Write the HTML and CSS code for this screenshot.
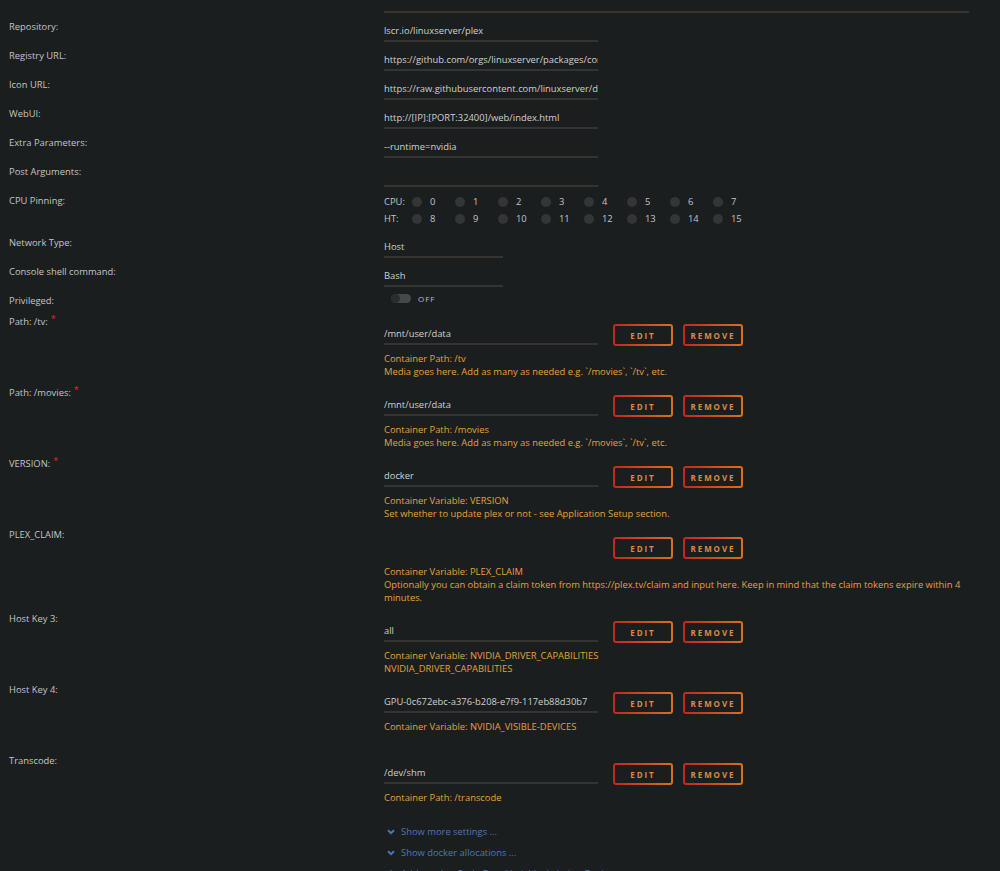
FILE: index.html
```html
<!DOCTYPE html>
<html lang="en">
<head>
    <meta charset="UTF-8">
    <meta name="viewport" content="width=device-width, initial-scale=1.0">
    <title>Update Container</title>
    <link rel="stylesheet" href="styles.css">
</head>
<body>
    <div class="form">
        <div class="topline"></div>

        <div class="row">
            <div class="label">Repository:</div>
            <div class="value"><input class="field" value="lscr.io/linuxserver/plex"></div>
        </div>
        <div class="row">
            <div class="label">Registry URL:</div>
            <div class="value"><input class="field" value="https://github.com/orgs/linuxserver/packages/container/package/plex"></div>
        </div>
        <div class="row">
            <div class="label">Icon URL:</div>
            <div class="value"><input class="field" value="https://raw.githubusercontent.com/linuxserver/docker-templates/master/linuxserver.io/img/plex-logo.png"></div>
        </div>
        <div class="row">
            <div class="label">WebUI:</div>
            <div class="value"><input class="field" value="http://[IP]:[PORT:32400]/web/index.html"></div>
        </div>
        <div class="row">
            <div class="label">Extra Parameters:</div>
            <div class="value"><input class="field" value="--runtime=nvidia"></div>
        </div>
        <div class="row">
            <div class="label">Post Arguments:</div>
            <div class="value"><input class="field" value=""></div>
        </div>

        <div class="row">
            <div class="label">CPU Pinning:</div>
            <div class="cpus">
                <div class="cpu-line">
                    <span class="cpu-name">CPU:</span>
                    <span class="core"><i></i>0</span>
                    <span class="core"><i></i>1</span>
                    <span class="core"><i></i>2</span>
                    <span class="core"><i></i>3</span>
                    <span class="core"><i></i>4</span>
                    <span class="core"><i></i>5</span>
                    <span class="core"><i></i>6</span>
                    <span class="core"><i></i>7</span>
                </div>
                <div class="cpu-line">
                    <span class="cpu-name">HT:</span>
                    <span class="core"><i></i>8</span>
                    <span class="core"><i></i>9</span>
                    <span class="core"><i></i>10</span>
                    <span class="core"><i></i>11</span>
                    <span class="core"><i></i>12</span>
                    <span class="core"><i></i>13</span>
                    <span class="core"><i></i>14</span>
                    <span class="core"><i></i>15</span>
                </div>
            </div>
        </div>

        <div class="row">
            <div class="label">Network Type:</div>
            <div class="value"><div class="field select">Host</div></div>
        </div>
        <div class="row">
            <div class="label">Console shell command:</div>
            <div class="value"><div class="field select">Bash</div></div>
        </div>
        <div class="row row-short">
            <div class="label">Privileged:</div>
            <div class="toggle-wrap">
                <span class="toggle"><span class="knob"></span></span>
                <span class="toggle-text">OFF</span>
            </div>
        </div>

        <div class="config">
            <div class="label">Path: /tv:<span class="req">*</span></div>
            <div class="config-body">
                <div class="config-line">
                    <input class="field" value="/mnt/user/data">
                    <button class="btn">Edit</button>
                    <button class="btn">Remove</button>
                </div>
                <div class="desc">
                    <div>Container Path: /tv</div>
                    <div>Media goes here. Add as many as needed e.g. `/movies`, `/tv`, etc.</div>
                </div>
            </div>
        </div>

        <div class="config">
            <div class="label">Path: /movies:<span class="req">*</span></div>
            <div class="config-body">
                <div class="config-line">
                    <input class="field" value="/mnt/user/data">
                    <button class="btn">Edit</button>
                    <button class="btn">Remove</button>
                </div>
                <div class="desc">
                    <div>Container Path: /movies</div>
                    <div>Media goes here. Add as many as needed e.g. `/movies`, `/tv`, etc.</div>
                </div>
            </div>
        </div>

        <div class="config">
            <div class="label">VERSION:<span class="req">*</span></div>
            <div class="config-body">
                <div class="config-line">
                    <input class="field" value="docker">
                    <button class="btn">Edit</button>
                    <button class="btn">Remove</button>
                </div>
                <div class="desc">
                    <div>Container Variable: VERSION</div>
                    <div>Set whether to update plex or not - see Application Setup section.</div>
                </div>
            </div>
        </div>

        <div class="config">
            <div class="label">PLEX_CLAIM:</div>
            <div class="config-body">
                <div class="config-line">
                    <span class="field hidden-field"></span>
                    <button class="btn">Edit</button>
                    <button class="btn">Remove</button>
                </div>
                <div class="desc">
                    <div>Container Variable: PLEX_CLAIM</div>
                    <div>Optionally you can obtain a claim token from https://plex.tv/claim and input here. Keep in mind that the claim tokens expire within 4 minutes.</div>
                </div>
            </div>
        </div>

        <div class="config">
            <div class="label">Host Key 3:</div>
            <div class="config-body">
                <div class="config-line">
                    <input class="field" value="all">
                    <button class="btn">Edit</button>
                    <button class="btn">Remove</button>
                </div>
                <div class="desc">
                    <div>Container Variable: NVIDIA_DRIVER_CAPABILITIES</div>
                    <div>NVIDIA_DRIVER_CAPABILITIES</div>
                </div>
            </div>
        </div>

        <div class="config">
            <div class="label">Host Key 4:</div>
            <div class="config-body">
                <div class="config-line">
                    <input class="field" value="GPU-0c672ebc-a376-b208-e7f9-117eb88d30b7">
                    <button class="btn">Edit</button>
                    <button class="btn">Remove</button>
                </div>
                <div class="desc">
                    <div>Container Variable: NVIDIA_VISIBLE-DEVICES</div>
                    <div></div>
                </div>
            </div>
        </div>

        <div class="config">
            <div class="label">Transcode:</div>
            <div class="config-body">
                <div class="config-line">
                    <input class="field" value="/dev/shm">
                    <button class="btn">Edit</button>
                    <button class="btn">Remove</button>
                </div>
                <div class="desc">
                    <div>Container Path: /transcode</div>
                    <div></div>
                </div>
            </div>
        </div>

        <div class="links">
            <a class="link" href="#">
                <svg width="8" height="6" viewBox="0 0 8 6"><polyline points="1,1.2 4,4.2 7,1.2" fill="none" stroke="currentColor" stroke-width="2"/></svg>
                Show more settings ...
            </a>
            <a class="link" href="#">
                <svg width="8" height="6" viewBox="0 0 8 6"><polyline points="1,1.2 4,4.2 7,1.2" fill="none" stroke="currentColor" stroke-width="2"/></svg>
                Show docker allocations ...
            </a>
            <a class="link" href="#">
                <svg width="8" height="8" viewBox="0 0 8 8"><path d="M4 0.5V7.5M0.5 4H7.5" stroke="currentColor" stroke-width="2"/></svg>
                Add another Path, Port, Variable, Label or Device
            </a>
        </div>
    </div>
</body>
</html>
```

FILE: styles.css
```css
body {
    margin: 0;
    background-color: #1b1e1f;
    color: #c4c4c4;
    font-family: "Open Sans", "Noto Sans", sans-serif;
    font-size: 9.4px;
    overflow: hidden;
}
.form {
    padding-top: 11px;
}
.topline {
    margin-left: 384px;
    width: 585px;
    height: 2px;
    background-color: #363431;
}
.row {
    display: flex;
    min-height: 29px;
}
.row-short {
    min-height: 20px;
}
.label {
    width: 375px;
    padding-left: 9px;
    padding-top: 7px;
    line-height: 14px;
    flex-shrink: 0;
}
.req {
    color: #e22828;
    font-size: 9px;
    margin-left: 3px;
    position: relative;
    top: -3px;
}
.value {
    padding-top: 8px;
}
.field {
    display: block;
    box-sizing: border-box;
    width: 214px;
    height: 21px;
    margin: 0;
    padding: 0 0 1px 0;
    border: none;
    border-bottom: 2px solid #363431;
    background: transparent;
    color: #cfcfcf;
    font: inherit;
    outline: none;
}
.select {
    width: 119px;
    line-height: 19px;
}
.hidden-field {
    border-bottom-color: transparent;
}
.cpus {
    padding-top: 6px;
    padding-bottom: 2px;
}
.cpu-line {
    display: flex;
    align-items: center;
    height: 17px;
}
.cpu-name {
    width: 28px;
}
.core {
    display: flex;
    align-items: center;
    width: 43px;
}
.core i {
    width: 10px;
    height: 10px;
    border-radius: 50%;
    background-color: #333538;
    margin-right: 8px;
}
.toggle-wrap {
    display: flex;
    align-items: center;
    padding-left: 7px;
    padding-top: 3px;
    height: 17px;
}
.toggle {
    width: 20px;
    height: 9px;
    border-radius: 5px;
    background-color: #46494c;
    position: relative;
}
.knob {
    position: absolute;
    left: 0;
    top: 0;
    width: 9px;
    height: 9px;
    border-radius: 50%;
    background-color: #2a2c2e;
}
.toggle-text {
    margin-left: 7px;
    font-size: 8px;
    letter-spacing: 1px;
    color: #bcbcbc;
}
.config {
    display: flex;
    min-height: 71px;
}
.config-body {
    padding-top: 16px;
    width: 585px;
}
.config-line {
    display: flex;
    align-items: flex-start;
}
.btn {
    box-sizing: border-box;
    width: 60px;
    height: 22px;
    margin-left: 15px;
    padding: 0;
    border: 2px solid transparent;
    border-radius: 3px;
    background: linear-gradient(#1b1e1f, #1b1e1f) padding-box,
                linear-gradient(90deg, #c4261f, #d8701f) border-box;
    color: #dc8a45;
    font-family: inherit;
    font-size: 8px;
    font-weight: bold;
    letter-spacing: 1.9px;
    text-transform: uppercase;
    cursor: pointer;
}
.btn + .btn {
    margin-left: 10px;
}
.desc {
    padding-top: 6px;
    padding-bottom: 1px;
    color: #e4a13a;
    line-height: 13px;
}
.desc div {
    min-height: 13px;
}
.links {
    padding-left: 384px;
    padding-top: 3px;
}
.link {
    display: flex;
    align-items: center;
    height: 21px;
    color: #4a78b5;
    text-decoration: none;
}
.link svg {
    margin-left: 3px;
    margin-right: 6px;
}
```
